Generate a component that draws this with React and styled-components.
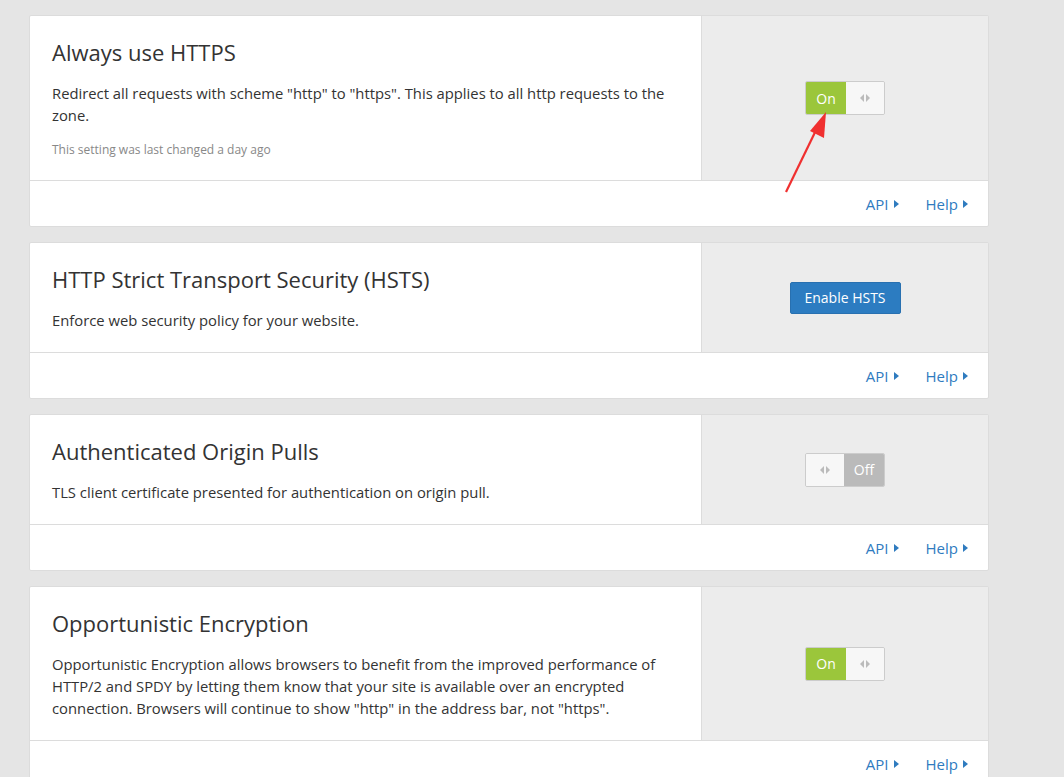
import styled, { createGlobalStyle } from "styled-components";

const GlobalStyle = createGlobalStyle`
  html, body {
    margin: 0;
    padding: 0;
    background: #e5e5e5;
    font-family: "Open Sans", "Liberation Sans", sans-serif;
    color: #333;
  }
`;

const settings = [
  {
    title: "Always use HTTPS",
    desc: 'Redirect all requests with scheme "http" to "https". This applies to all http requests to the zone.',
    note: "This setting was last changed a day ago",
    control: "on",
  },
  {
    title: "HTTP Strict Transport Security (HSTS)",
    desc: "Enforce web security policy for your website.",
    control: "button",
  },
  {
    title: "Authenticated Origin Pulls",
    desc: "TLS client certificate presented for authentication on origin pull.",
    control: "off",
  },
  {
    title: "Opportunistic Encryption",
    desc: 'Opportunistic Encryption allows browsers to benefit from the improved performance of HTTP/2 and SPDY by letting them know that your site is available over an encrypted connection. Browsers will continue to show "http" in the address bar, not "https".',
    control: "on",
  },
];

function Grip() {
  return (
    <svg width="12" height="8" viewBox="0 0 12 8">
      <polygon points="5,0 5,8 1,4" fill="#bbb" />
      <polygon points="7,0 7,8 11,4" fill="#bbb" />
    </svg>
  );
}

function Toggle({ on }) {
  return (
    <ToggleBox>
      {on ? (
        <>
          <ToggleLabel $on>On</ToggleLabel>
          <ToggleKnob>
            <Grip />
          </ToggleKnob>
        </>
      ) : (
        <>
          <ToggleKnob>
            <Grip />
          </ToggleKnob>
          <ToggleLabel>Off</ToggleLabel>
        </>
      )}
    </ToggleBox>
  );
}

function Caret() {
  return (
    <svg width="5" height="8" viewBox="0 0 5 8">
      <polygon points="0,0 5,4 0,8" fill="#2f7bbf" />
    </svg>
  );
}

function App() {
  return (
    <Page>
      <GlobalStyle />
      {settings.map((s) => (
        <Card key={s.title}>
          <CardBody>
            <Info>
              <Title>{s.title}</Title>
              <Desc>{s.desc}</Desc>
              {s.note && <Note>{s.note}</Note>}
            </Info>
            <Control>
              {s.control === "button" ? (
                <BlueButton>Enable HSTS</BlueButton>
              ) : (
                <Toggle on={s.control === "on"} />
              )}
            </Control>
          </CardBody>
          <Footer>
            <FooterLink>
              API <Caret />
            </FooterLink>
            <FooterLink>
              Help <Caret />
            </FooterLink>
          </Footer>
        </Card>
      ))}
      <Arrow width="60" height="100" viewBox="0 0 60 100">
        <line x1="6" y1="92" x2="40" y2="22" stroke="#f03030" strokeWidth="2.2" />
        <polygon points="46,12 44,38 30,31" fill="#f03030" />
      </Arrow>
    </Page>
  );
}
export default App;

const Page = styled.div`
  position: relative;
  padding: 15px 0 0 29px;
  display: flex;
  flex-direction: column;
  gap: 15px;
  width: 960px;
`;
const Card = styled.div`
  background: #fff;
  border: 1px solid #dcdcdc;
  border-radius: 2px;
  display: flex;
  flex-direction: column;
`;
const CardBody = styled.div`
  display: grid;
  grid-template-columns: 671px 1fr;
`;
const Info = styled.div`
  padding: 21px 22px 21px 22px;
`;
const Title = styled.h2`
  margin: 0 0 15px;
  font-size: 22px;
  font-weight: 400;
  line-height: 30px;
  color: #333;
`;
const Desc = styled.p`
  margin: 0;
  font-size: 14.8px;
  line-height: 22px;
  color: #333;
`;
const Note = styled.p`
  margin: 15px 0 0;
  font-size: 12px;
  line-height: 18px;
  color: #888;
`;
const Control = styled.div`
  background: #ececec;
  border-left: 1px solid #dcdcdc;
  display: flex;
  align-items: center;
  justify-content: center;
`;
const ToggleBox = styled.div`
  display: flex;
  width: 78px;
  height: 32px;
  border: 1px solid #ccc;
  border-radius: 2px;
  overflow: hidden;
`;
const ToggleLabel = styled.div`
  width: 40px;
  display: flex;
  align-items: center;
  justify-content: center;
  background: ${(p) => (p.$on ? "#9bc63b" : "#bababa")};
  color: #fff;
  font-size: 14px;
`;
const ToggleKnob = styled.div`
  flex: 1;
  display: flex;
  align-items: center;
  justify-content: center;
  background: #f7f7f7;
`;
const BlueButton = styled.button`
  width: 111px;
  height: 32px;
  background: #2c7cc1;
  border: 1px solid #2870b0;
  border-radius: 2px;
  color: #fff;
  font-family: "Open Sans", "Liberation Sans", sans-serif;
  font-size: 14px;
  padding: 0;
`;
const Footer = styled.div`
  height: 45px;
  border-top: 1px solid #dcdcdc;
  display: flex;
  align-items: center;
  justify-content: flex-end;
  gap: 27px;
  padding-right: 20px;
`;
const FooterLink = styled.a`
  display: flex;
  align-items: center;
  gap: 5px;
  color: #2f7bbf;
  font-size: 15px;
  cursor: pointer;
`;
const Arrow = styled.svg`
  position: absolute;
  left: 780px;
  top: 100px;
`;
